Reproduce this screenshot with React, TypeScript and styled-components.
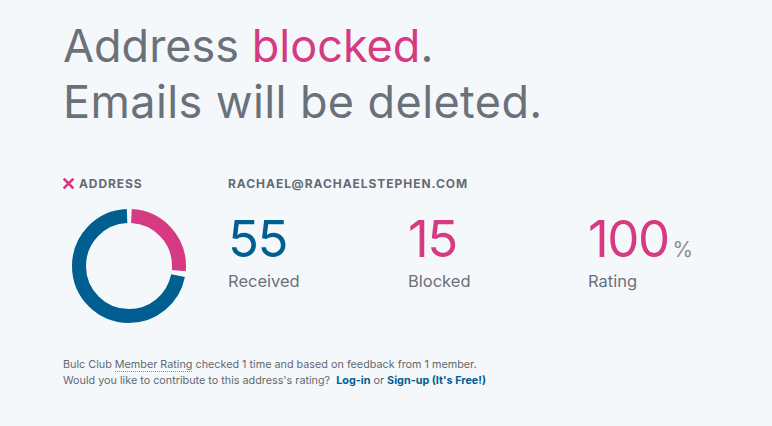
import styled, { createGlobalStyle } from 'styled-components'

const GlobalStyle = createGlobalStyle`
  html, body {
    margin: 0;
    padding: 0;
    background: #f5f8fb;
  }
  body {
    font-family: Inter, "Open Sans", sans-serif;
    color: #6b7179;
  }
`

const pink = '#d63a83'
const blue = '#005e91'

const Page = styled.div({
  width: 772,
  height: 426,
  boxSizing: 'border-box',
  padding: '18px 0 0 63px',
  overflow: 'hidden',
})

const Heading = styled.h1({
  margin: 0,
  fontSize: 45,
  fontWeight: 400,
  lineHeight: '56px',
  color: '#6b7179',
})

const Pink = styled.span({ color: pink })

const Wide = styled.span({ letterSpacing: 0.4 })

const Summary = styled.div({
  display: 'grid',
  gridTemplateColumns: '165px 180px 180px 180px',
  marginTop: 46,
})

const Label = styled.div({
  display: 'flex',
  alignItems: 'center',
  gap: 5,
  fontSize: 12,
  fontWeight: 700,
  letterSpacing: 0.9,
  color: '#656b73',
  height: 14,
})

const EmailLabel = styled(Label)({
  gridColumn: '2 / 5',
  letterSpacing: 0.95,
})

const DonutCell = styled.div({
  marginTop: 19,
  marginLeft: 9,
})

const Stat = styled.div({
  display: 'flex',
  flexDirection: 'column',
  marginTop: 23,
})

const Value = styled.div<{ $color: string }>`
  font-size: 51px;
  line-height: 52px;
  height: 52px;
  font-weight: 400;
  letter-spacing: -1.5px;
  color: ${p => p.$color};
  display: flex;
  align-items: baseline;
`

const Unit = styled.span({
  fontSize: 21,
  lineHeight: 1,
  color: '#8a8f95',
  marginLeft: 4,
  letterSpacing: 0,
})

const Caption = styled.div({
  fontSize: 16.5,
  color: '#6b7179',
  marginTop: 6,
})

const Footer = styled.div({
  marginTop: 30,
  fontSize: 10.8,
  lineHeight: '16px',
  color: '#616870',
})

const Dotted = styled.span({
  borderBottom: '1px dotted #8a8f95',
})

const Link = styled.a({
  color: blue,
  fontWeight: 700,
  textDecoration: 'none',
})

const Cross = () => (
  <svg width="11" height="11" viewBox="0 0 11 11">
    <path d="M1.5 1.5 L9.5 9.5 M9.5 1.5 L1.5 9.5" stroke={pink} strokeWidth="2.6" strokeLinecap="square" />
  </svg>
)

const Donut = ({ total, blocked }: { total: number; blocked: number }) => {
  const r = 50
  const c = 2 * Math.PI * r
  const gap = 5
  const pinkLen = (blocked / total) * c - gap
  const blueLen = c - (blocked / total) * c - gap
  return (
    <svg width="114" height="114" viewBox="0 0 114 114">
      <g transform="rotate(-90 57 57)">
        <circle cx="57" cy="57" r={r} fill="none" stroke={pink} strokeWidth="14"
          strokeDasharray={`${pinkLen} ${c}`} strokeDashoffset={-gap / 2} />
        <circle cx="57" cy="57" r={r} fill="none" stroke={blue} strokeWidth="14"
          strokeDasharray={`${blueLen} ${c}`} strokeDashoffset={-((blocked / total) * c + gap / 2)} />
      </g>
    </svg>
  )
}

const stats = [
  { value: '55', label: 'Received', color: blue },
  { value: '15', label: 'Blocked', color: pink },
  { value: '100', label: 'Rating', color: pink, unit: '%' },
]

export default function App() {
  return (
    <Page>
      <GlobalStyle />
      <Heading>
        Address <Pink>blocked</Pink>.<br />
        <Wide>Emails will be deleted.</Wide>
      </Heading>
      <Summary>
        <Label><Cross />ADDRESS</Label>
        <EmailLabel>RACHAEL@RACHAELSTEPHEN.COM</EmailLabel>
        <DonutCell><Donut total={55} blocked={15} /></DonutCell>
        {stats.map(s => (
          <Stat key={s.label}>
            <Value $color={s.color}>
              {s.value}
              {s.unit && <Unit>{s.unit}</Unit>}
            </Value>
            <Caption>{s.label}</Caption>
          </Stat>
        ))}
      </Summary>
      <Footer>
        Bulc Club <Dotted>Member Rating</Dotted> checked 1 time and based on feedback from 1 member.
        <br />
        Would you like to contribute to this address's rating?&nbsp; <Link href="#">Log-in</Link> or{' '}
        <Link href="#">Sign-up (It's Free!)</Link>
      </Footer>
    </Page>
  )
}
